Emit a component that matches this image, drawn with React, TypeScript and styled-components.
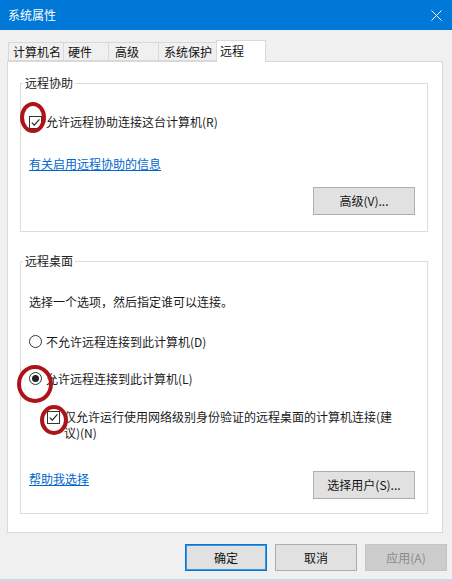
import React from 'react';
import styled, { createGlobalStyle } from 'styled-components';

const Global = createGlobalStyle`
  html, body { margin: 0; padding: 0; background: #f0f0f0; }
  body {
    font-family: "Noto Sans CJK SC", "Noto Sans", sans-serif;
    font-size: 12px;
    color: #1a1a1a;
  }
  * { box-sizing: border-box; }
`;

const Window = styled.div`
  position: relative;
  width: 452px;
  height: 581px;
  background: #f0f0f0;
  display: flex;
  flex-direction: column;
  border-bottom: 2px solid #c4daf0;
  overflow: hidden;
`;

const TitleBar = styled.div`
  height: 30px;
  flex: none;
  background: #0078d7;
  display: flex;
  align-items: center;
  justify-content: space-between;
  padding: 0 10px 0 8px;
  color: #fff;
  font-size: 12px;
  line-height: 16px;
`;

const CloseIcon = () => (
  <svg width="11" height="11" viewBox="0 0 11 11">
    <path d="M0.5 0.5 L10.5 10.5 M10.5 0.5 L0.5 10.5" stroke="#fff" strokeWidth="1" fill="none" />
  </svg>
);

const Content = styled.div`
  flex: 1;
  display: flex;
  flex-direction: column;
  padding: 10px 7px 0 7px;
`;

const TabStrip = styled.div`
  display: flex;
  align-items: flex-end;
  height: 21px;
  margin-left: 1px;
`;

const Tab = styled.div<{ $w: number; $pad: number; $active?: boolean }>`
  position: relative;
  z-index: ${(p) => (p.$active ? 1 : 0)};
  width: ${(p) => p.$w}px;
  height: ${(p) => (p.$active ? 22 : 19)}px;
  margin-bottom: ${(p) => (p.$active ? -1 : 0)}px;
  margin-right: -1px;
  padding-left: ${(p) => p.$pad}px;
  padding-bottom: ${(p) => (p.$active ? 1 : 0)}px;
  display: flex;
  align-items: center;
  background: ${(p) => (p.$active ? '#ffffff' : '#f0f0f0')};
  border: 1px solid #d9d9d9;
  border-bottom: ${(p) => (p.$active ? 'none' : '1px solid #d9d9d9')};
  font-size: 12px;
  line-height: 16px;
  color: #111;
`;

const Panel = styled.div`
  width: 436px;
  height: 472px;
  background: #ffffff;
  border: 1px solid #d9d9d9;
  padding: 13px 14px 0 12px;
  display: flex;
  flex-direction: column;
`;

const Group = styled.fieldset<{ $pt: number; $pb: number; $mt?: number }>`
  margin: ${(p) => p.$mt || 0}px 0 0 0;
  padding: ${(p) => p.$pt}px 12px ${(p) => p.$pb}px 8px;
  border: 1px solid #dcdcdc;
  min-width: 0;
  display: flex;
  flex-direction: column;
`;

const Legend = styled.legend`
  padding: 0 2px;
  margin-left: -6px;
  line-height: 16px;
  font-size: 12px;
  color: #222;
`;

const Row = styled.div<{ $mt?: number; $indent?: number }>`
  display: flex;
  align-items: flex-start;
  gap: 4px;
  margin-top: ${(p) => p.$mt || 0}px;
  margin-left: ${(p) => p.$indent || 0}px;
  line-height: 16px;
`;

const Label = styled.span<{ $max?: number }>`
  line-height: 16px;
  max-width: ${(p) => (p.$max ? `${p.$max}px` : 'none')};
`;

const Text = styled.div<{ $mt?: number }>`
  margin-top: ${(p) => p.$mt || 0}px;
  line-height: 16px;
`;

const Box = styled.span`
  flex: none;
  width: 13px;
  height: 13px;
  margin-top: 2px;
  border: 1px solid #333;
  background: #fff;
  display: flex;
  align-items: center;
  justify-content: center;
`;

const RadioCircle = styled.span`
  flex: none;
  width: 13px;
  height: 13px;
  margin-top: 1px;
  border: 1px solid #333;
  border-radius: 50%;
  background: #fff;
  display: flex;
  align-items: center;
  justify-content: center;
`;

const RadioDot = styled.span`
  width: 7px;
  height: 7px;
  border-radius: 50%;
  background: #222;
`;

const Link = styled.a<{ $mt?: number }>`
  display: inline-block;
  align-self: flex-start;
  margin-top: ${(p) => p.$mt || 0}px;
  color: #0066cc;
  text-decoration: underline;
  line-height: 16px;
  cursor: pointer;
`;

const ActionRow = styled.div<{ $mt: number; $between?: boolean }>`
  display: flex;
  align-items: center;
  justify-content: ${(p) => (p.$between ? 'space-between' : 'flex-end')};
  margin-top: ${(p) => p.$mt}px;
`;

const Button = styled.button<{ $w: number; $h: number; $variant?: 'default' | 'disabled' }>`
  width: ${(p) => p.$w}px;
  height: ${(p) => p.$h}px;
  padding: 0;
  font-family: inherit;
  font-size: 12px;
  line-height: 16px;
  color: ${(p) => (p.$variant === 'disabled' ? '#8a8a8a' : '#111')};
  background: ${(p) => (p.$variant === 'disabled' ? '#cccccc' : '#e1e1e1')};
  border: 1px solid
    ${(p) => (p.$variant === 'default' ? '#0078d7' : p.$variant === 'disabled' ? '#c4c4c4' : '#adadad')};
  box-shadow: ${(p) => (p.$variant === 'default' ? 'inset 0 0 0 1px #3f95dd' : 'none')};
`;

const Footer = styled.div`
  display: flex;
  justify-content: flex-end;
  gap: 8px;
  margin-top: 11px;
  margin-right: -2px;
`;

const Mark = styled.div<{ $x: number; $y: number; $w: number; $h: number }>`
  position: absolute;
  left: ${(p) => p.$x}px;
  top: ${(p) => p.$y}px;
  width: ${(p) => p.$w}px;
  height: ${(p) => p.$h}px;
  border: 4px solid #ad1419;
  border-radius: 50%;
  pointer-events: none;
`;

const Check = () => (
  <svg width="11" height="11" viewBox="0 0 11 11">
    <path d="M1.8 5.6 L4.3 8.2 L9.4 2.4" stroke="#222" strokeWidth="1.2" fill="none" />
  </svg>
);

const Checkbox = () => (
  <Box>
    <Check />
  </Box>
);

const Radio = ({ on }: { on?: boolean }) => <RadioCircle>{on && <RadioDot />}</RadioCircle>;

export default function App() {
  return (
    <>
      <Global />
      <Window>
        <TitleBar>
          <span>系统属性</span>
          <CloseIcon />
        </TitleBar>
        <Content>
          <TabStrip>
            <Tab $w={56} $pad={4}>计算机名</Tab>
            <Tab $w={46} $pad={4}>硬件</Tab>
            <Tab $w={51} $pad={6}>高级</Tab>
            <Tab $w={59} $pad={5}>系统保护</Tab>
            <Tab $w={50} $pad={3} $active>远程</Tab>
          </TabStrip>
          <Panel>
            <Group $pt={23} $pb={16}>
              <Legend>远程协助</Legend>
              <Row>
                <Checkbox />
                <Label>允许远程协助连接这台计算机(R)</Label>
              </Row>
              <Link $mt={26}>有关启用远程协助的信息</Link>
              <ActionRow $mt={15}>
                <Button $w={102} $h={28}>高级(V)...</Button>
              </ActionRow>
            </Group>
            <Group $pt={25} $pb={14} $mt={21}>
              <Legend>远程桌面</Legend>
              <Text>选择一个选项，然后指定谁可以连接。</Text>
              <Row $mt={24}>
                <Radio />
                <Label>不允许远程连接到此计算机(D)</Label>
              </Row>
              <Row $mt={21}>
                <Radio on />
                <Label>允许远程连接到此计算机(L)</Label>
              </Row>
              <Row $mt={22} $indent={18}>
                <Checkbox />
                <Label $max={334}>仅允许运行使用网络级别身份验证的远程桌面的计算机连接(建议)(N)</Label>
              </Row>
              <ActionRow $mt={30} $between>
                <Link>帮助我选择</Link>
                <Button $w={102} $h={28}>选择用户(S)...</Button>
              </ActionRow>
            </Group>
          </Panel>
          <Footer>
            <Button $w={82} $h={27} $variant="default">确定</Button>
            <Button $w={82} $h={27}>取消</Button>
            <Button $w={82} $h={27} $variant="disabled">应用(A)</Button>
          </Footer>
        </Content>
        <Mark $x={20} $y={102} $w={26} $h={31} />
        <Mark $x={17} $y={365} $w={36} $h={38} />
        <Mark $x={40} $y={405} $w={28} $h={30} />
      </Window>
    </>
  );
}
